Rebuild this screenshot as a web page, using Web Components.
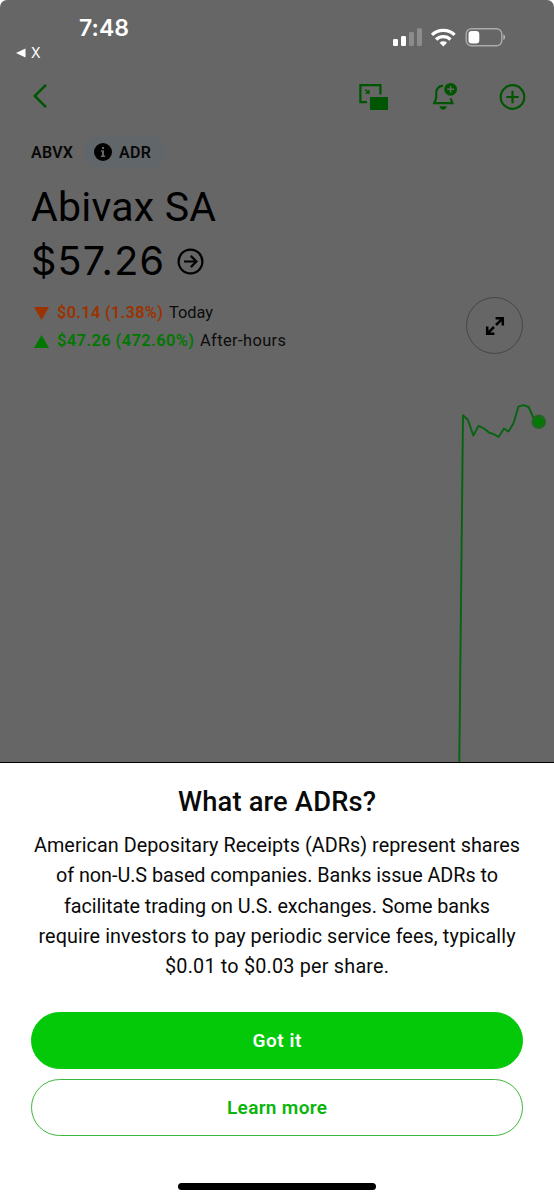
<!DOCTYPE html>
<html lang="en">
<head>
<meta charset="utf-8">
<title>Abivax SA</title>
<style>
    body {
        margin: 0;
        background: #fff;
        font-family: Roboto, "Liberation Sans", sans-serif;
    }
</style>
</head>
<body>
<stock-screen></stock-screen>

<script>
const define = (name, html, connected) => {
    const template = document.createElement('template')
    template.innerHTML = html

    window.customElements.define(name, class extends HTMLElement {
        constructor() {
            super()
            const shadow = this.attachShadow({ mode: 'open' })
            shadow.appendChild(template.content.cloneNode(true))
        }

        connectedCallback() {
            if (connected) { connected(this) }
        }
    })
}

/* one line of text, tracked so that it takes exactly the width it is given */
define('tracked-text', `
    <style>
        :host { display: inline-block; white-space: nowrap; text-align: left; }
    </style>
    <span><slot></slot></span>
`, (el) => {
    const width = Number(el.getAttribute('width'))
    const span = el.shadowRoot.querySelector('span')
    const natural = span.getBoundingClientRect().width
    const gaps = el.textContent.length - 1
    span.style.letterSpacing = (width - natural) / gaps + 'px'
    el.style.width = width + 'px'
})

define('status-bar', `
    <style>
        :host { display: flex; justify-content: space-between; height: 70px; box-sizing: border-box; padding: 14px 48px 0 16px; color: #fff; font-family: Inter, "Liberation Sans", sans-serif; }
        .time { padding-left: 63px; font-size: 23px; line-height: 28px; font-weight: 600; }
        .back { display: flex; align-items: center; gap: 5px; font-size: 14px; line-height: 22px; }
        .icons { margin-top: 13px; }
        svg { display: block; }
    </style>
    <div>
        <div class="time"><tracked-text width="50">7:48</tracked-text></div>
        <div class="back">
            <svg width="10" height="10"><path d="M0 5L9.5 .6V9.4z" fill="#fff"/></svg>
            <span>X</span>
        </div>
    </div>
    <svg class="icons" width="113" height="20" viewBox="393 27 113 20" fill="#fff">
        <rect x="393" y="39" width="5" height="7" rx="1.3"/>
        <rect x="401" y="36" width="5" height="10" rx="1.3"/>
        <g opacity=".25">
            <rect x="409" y="32" width="5" height="14" rx="1.3"/>
            <rect x="417" y="28.3" width="5" height="17.7" rx="1.3"/>
        </g>
        <g fill="none" stroke="#fff" stroke-width="3.3">
            <path d="M432 34.9a16.2 16.2 0 0 1 22.6 0"/>
            <path d="M436.1 39.5a10.3 10.3 0 0 1 14.4 0"/>
        </g>
        <path d="M439.6 42.8a5.4 5.4 0 0 1 7.4 0l-3.7 3.7z"/>
        <rect x="466.2" y="28.7" width="35.6" height="17" rx="5.3" fill="none" stroke="#fff" stroke-opacity=".45" stroke-width="1.4"/>
        <path d="M503.3 34.3c2.4.8 2.4 4.9 0 5.8z" opacity=".5"/>
        <rect x="468.5" y="31" width="10.8" height="12.5" rx="3.2"/>
    </svg>
`)

define('nav-bar', `
    <style>
        :host { display: flex; justify-content: space-between; height: 56px; padding: 12px 28px 0 33px; box-sizing: border-box; }
        svg { display: block; fill: none; stroke: #005600; }
        .actions { display: flex; gap: 40px; }
    </style>
    <svg width="16" height="28" viewBox="33 82 16 28" stroke-width="2.5"><path d="M46 84.8L34.7 96L46 107.2"/></svg>
    <div class="actions">
        <svg width="31" height="30" viewBox="359 82 31 30" stroke-width="2.3">
            <path d="M367 102.2H360.4V85.2H380.4V94.5"/>
            <path d="M365.3 89.5l3.4 3.4" stroke-width="1.6"/>
            <path d="M369.6 89.2v4.6h-4.6z" fill="#005600" stroke="none"/>
            <path d="M370 97h18v13h-18z" fill="#005600" stroke="none"/>
        </svg>
        <svg width="28" height="30" viewBox="430 82 28 30" stroke-width="2.1">
            <path d="M443 85.6c-4.6.5-6.8 3.6-6.8 7.8v4.8l-2 4.9h18.3l-2-4.8"/>
            <path d="M439.4 106.3h7.4c-.6 2-1.9 3.4-3.7 3.4s-3.1-1.4-3.7-3.4z" fill="#005600" stroke="none"/>
            <circle cx="450.6" cy="89.3" r="6.4" fill="#005600" stroke="none"/>
            <path d="M450.6 85.9v6.8M447.2 89.3h6.8" stroke="#666" stroke-width="1.4"/>
        </svg>
        <svg width="28" height="30" viewBox="498 82 28 30" stroke-width="2.2">
            <circle cx="512.5" cy="97" r="11.8"/>
            <path d="M512.5 90.8v12.4M506.3 97h12.4"/>
        </svg>
    </div>
`)

define('info-chip', `
    <style>
        :host { display: flex; align-items: center; gap: 7px; height: 32px; box-sizing: border-box; padding: 0 15px 0 11px; border-radius: 16px; background: #61666a; }
        svg { display: block; }
    </style>
    <svg width="18" height="18" viewBox="0 0 18 18">
        <circle cx="9" cy="9" r="9"/>
        <path d="M8 4h2v2H8zM7 7.3h3v5.2h1.2V14H6.8v-1.5H8V8.8H7z" fill="#666"/>
    </svg>
    <slot></slot>
`)

define('price-change', `
    <style>
        :host { display: flex; align-items: center; height: 28px; font-size: 16.4px; line-height: 28px; color: #0c0c0c; }
        svg { display: block; margin-right: 8px; fill: var(--tone); }
        .amount { margin-right: 6px; font-weight: 600; color: var(--tone); }
        :host([up]) { --tone: #007800; }
        :host([down]) { --tone: #9c3200; }
        :host([up]) svg { transform: scaleY(-1); }
    </style>
    <svg width="15" height="13"><path d="M0 0h15L7.5 13z"/></svg>
    <div class="amount"><slot name="amount"></slot></div>
    <slot></slot>
`)

define('price-chart', `
    <style>
        :host { display: block; }
        svg { display: block; }
    </style>
    <svg width="554" height="364" viewBox="0 398 554 364">
        <path d="M459.3 762L463 415.2L468 420L473.3 435.5L478.7 425.8L484 428.5L489 432.5L494 434.3L498.5 437L504 428.6L508.5 431.5L513.4 423.5L518.5 406.6L523.5 405.2L528.6 407L534.5 420L539 422" fill="none" stroke="#066411" stroke-width="1.9" stroke-linejoin="round"/>
        <circle cx="538.8" cy="421.8" r="7.3" fill="#256325"/>
        <circle cx="538.8" cy="421.8" r="4.8" fill="#007a00"/>
    </svg>
`)

define('pill-button', `
    <style>
        :host { display: flex; }
        button { flex: 1; height: 57px; box-sizing: border-box; padding: 0; border: 1.3px solid #3db83d; border-radius: 29px; background: #fff; color: #09b50b; font: 600 19px/55px Roboto, "Liberation Sans", sans-serif; }
        :host([primary]) button { border-color: #03c908; background: #03c908; color: #fff; }
    </style>
    <button><slot></slot></button>
`)

define('bottom-sheet', `
    <style>
        :host { display: flex; flex-direction: column; height: 438px; box-sizing: border-box; padding: 21px 31px 0; border-top: 1.5px solid #000; background: #fff; color: #0a0a0a; text-align: center; }
        h2 { margin: 0; font-size: 27.3px; line-height: 36px; font-weight: 500; }
        .body { height: 152px; margin-top: 11px; font-size: 19.8px; line-height: 30.25px; }
        .buttons { display: flex; flex-direction: column; gap: 10px; margin-top: 29px; }
        .home { width: 198px; height: 7px; margin: 47px auto 0; border-radius: 4px; background: #000; }
    </style>
    <h2><slot name="title"></slot></h2>
    <div class="body"><slot></slot></div>
    <div class="buttons"><slot name="buttons"></slot></div>
    <div class="home"></div>
`)

define('stock-screen', `
    <style>
        :host { display: flex; flex-direction: column; width: 554px; height: 1200px; overflow: hidden; }
        .dimmed { height: 762px; overflow: hidden; border-radius: 7px 7px 0 0; background: #666; color: #000; }
        .symbol { display: flex; align-items: center; gap: 10px; height: 32px; margin: 10px 0 12px 31px; font-size: 16px; font-weight: 600; color: #080808; }
        .name, .price { display: flex; align-items: center; height: 54px; padding-left: 31px; font-size: 41px; line-height: 54px; }
        .price { gap: 13px; font-family: Inter, "Liberation Sans", sans-serif; font-size: 39.5px; }
        svg { display: block; fill: none; stroke: #000; }
        .changes { display: flex; justify-content: space-between; height: 110px; padding: 9px 31px 0 34px; box-sizing: border-box; }
        .rows { padding-top: 2px; }
        .expand { display: flex; align-items: center; justify-content: center; width: 57px; height: 57px; box-sizing: border-box; border: 1px solid #464646; border-radius: 50%; }
        .body-line { display: block; margin: 0 auto; }
    </style>
    <div class="dimmed">
        <status-bar></status-bar>
        <nav-bar></nav-bar>
        <div class="symbol">
            <tracked-text width="42">ABVX</tracked-text>
            <info-chip><tracked-text width="32">ADR</tracked-text></info-chip>
        </div>
        <div class="name"><tracked-text width="185">Abivax SA</tracked-text></div>
        <div class="price">
            <tracked-text width="133">$57.26</tracked-text>
            <svg width="27" height="27" viewBox="0 0 27 27" stroke-width="2.2">
                <circle cx="13.5" cy="13.5" r="11.9"/>
                <path d="M7 13.5h12M13.8 7.9l5.6 5.6l-5.6 5.6"/>
            </svg>
        </div>
        <div class="changes">
            <div class="rows">
                <price-change down>
                    <tracked-text slot="amount" width="106">$0.14 (1.38%)</tracked-text>
                    <tracked-text width="44">Today</tracked-text>
                </price-change>
                <price-change up>
                    <tracked-text slot="amount" width="137">$47.26 (472.60%)</tracked-text>
                    <tracked-text width="86">After-hours</tracked-text>
                </price-change>
            </div>
            <div class="expand">
                <svg width="20" height="20" viewBox="0 0 20 20" stroke-width="2.5">
                    <path d="M11 9L17.2 2.8M10.6 2.3H17.8V9.4M9 11L2.8 17.2M2.2 10.6V17.7H9.4"/>
                </svg>
            </div>
        </div>
        <price-chart></price-chart>
    </div>
    <bottom-sheet>
        <tracked-text slot="title" width="198">What are ADRs?</tracked-text>
        <tracked-text class="body-line" width="486">American Depositary Receipts (ADRs) represent shares</tracked-text>
        <tracked-text class="body-line" width="442">of non-U.S based companies. Banks issue ADRs to</tracked-text>
        <tracked-text class="body-line" width="426">facilitate trading on U.S. exchanges. Some banks</tracked-text>
        <tracked-text class="body-line" width="477">require investors to pay periodic service fees, typically</tracked-text>
        <tracked-text class="body-line" width="224">$0.01 to $0.03 per share.</tracked-text>
        <pill-button slot="buttons" primary><tracked-text width="49">Got it</tracked-text></pill-button>
        <pill-button slot="buttons"><tracked-text width="100">Learn more</tracked-text></pill-button>
    </bottom-sheet>
`)
</script>
</body>
</html>
